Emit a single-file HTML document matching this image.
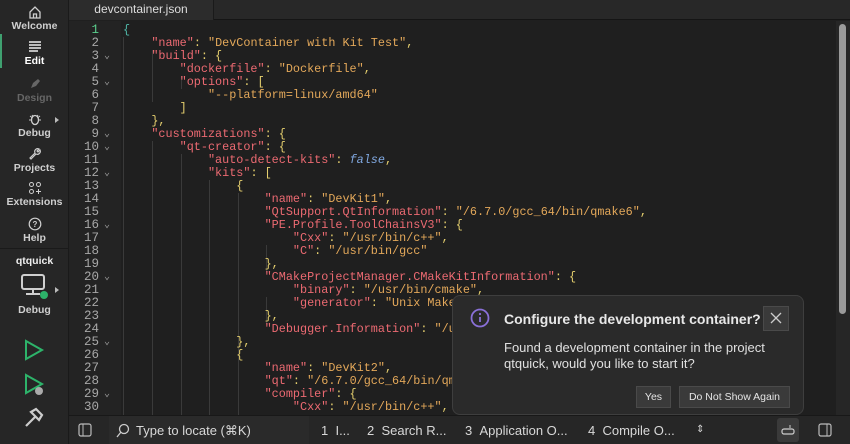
<!DOCTYPE html>
<html><head><meta charset="utf-8"><style>
*{margin:0;padding:0;box-sizing:border-box}
body{width:850px;height:444px;background:#1f1f1f;overflow:hidden;position:relative;font-family:"Liberation Sans",sans-serif}
#side{position:absolute;left:0;top:0;width:69px;height:444px;background:#262626;border-right:1px solid #1a1a1a}
.sb{position:absolute;left:0;width:69px;text-align:center;color:#cfcfcf;font-size:10.5px;font-weight:bold}
.sb svg{display:block;margin:0 auto 1px}
#tabbar{position:absolute;left:69px;top:0;right:0;height:20px;background:#282828;border-bottom:1px solid #151515}
#tab{position:absolute;left:0;top:0;width:145px;height:20px;background:#2c2c2c;color:#ddd;font-size:12px;text-align:center;line-height:19px;border-right:1px solid #1a1a1a}
#gutter{position:absolute;left:69px;top:21px;width:52px;height:394px;background:#232323}
.code{position:absolute;top:24px;font-family:"Liberation Mono",monospace;font-size:11.8px;line-height:13px;white-space:pre}
#nums{left:69px;width:30px;text-align:right;color:#a8a8a8;font-size:12.5px}
#folds{left:104px;color:#9a9a9a;font-size:10px}
#src{left:123px;color:#e5cf6e}
.k{color:#ec6a72}.s{color:#e3a85a}.b{color:#80a8e0;font-style:italic}
.g{position:absolute;width:1px;background:#3a3a3a}
#status{position:absolute;left:69px;top:415px;right:0;height:29px;background:#262626;border-top:1px solid #181818;color:#d8d8d8;font-size:13px}
#status span{position:absolute;top:7px}
#dlg{position:absolute;left:452px;top:295px;width:352px;height:120px;background:#2a2a2a;border:1px solid #3e3e3e;border-radius:8px;color:#e8e8e8}
.btn{position:absolute;top:90px;height:22px;background:#3a3a3a;border:1px solid #4a4a4a;font-size:10.5px;text-align:center;line-height:20px;color:#e5e5e5}
</style></head><body>
<div id="side">
 <div style="position:absolute;left:0;top:34px;width:2px;height:34px;background:#3fa070"></div>
 <div class="sb" style="top:5px"><svg width="14" height="14" viewBox="0 0 14 14"><path d="M2 7L7 2l5 5v6H2z M5.5 13V9h3v4" fill="none" stroke="#cfcfcf" stroke-width="1.3"/></svg>Welcome</div>
 <div class="sb" style="top:40px;color:#fff"><svg width="14" height="14" viewBox="0 0 14 14"><path d="M1 2h12M1 5h12M1 8h12M1 11h9" stroke="#eee" stroke-width="1.4"/></svg>Edit</div>
 <div class="sb" style="top:77px;color:#666"><svg width="14" height="14" viewBox="0 0 14 14"><path d="M3 11l2-5 5-4 2 2-4 5z" fill="#666"/></svg>Design</div>
 <div class="sb" style="top:112px"><svg width="14" height="14" viewBox="0 0 14 14"><ellipse cx="7" cy="8" rx="3.5" ry="4.5" fill="none" stroke="#cfcfcf" stroke-width="1.3"/><path d="M1 8h2.5M10.5 8H13M2 4l2 1.5M12 4l-2 1.5M4 3l1 1.5M10 3l-1 1.5" stroke="#cfcfcf"/></svg>Debug</div>
 <div style="position:absolute;left:55px;top:117px;border-left:4px solid #bbb;border-top:3px solid transparent;border-bottom:3px solid transparent"></div>
 <div class="sb" style="top:147px"><svg width="14" height="14" viewBox="0 0 14 14"><path d="M12 3a3 3 0 0 1-4 4L3 12l-1-1 5-5a3 3 0 0 1 4-4l-2 2 1 1z" fill="none" stroke="#cfcfcf" stroke-width="1.2"/></svg>Projects</div>
 <div class="sb" style="top:181px"><svg width="14" height="14" viewBox="0 0 14 14"><circle cx="3.5" cy="3.5" r="2" fill="none" stroke="#cfcfcf"/><circle cx="10.5" cy="3.5" r="2" fill="none" stroke="#cfcfcf"/><circle cx="3.5" cy="10.5" r="2" fill="none" stroke="#cfcfcf"/><path d="M10.5 8v5M8 10.5h5" stroke="#cfcfcf"/></svg>Extensions</div>
 <div class="sb" style="top:217px"><svg width="14" height="14" viewBox="0 0 14 14"><circle cx="7" cy="7" r="5.8" fill="none" stroke="#cfcfcf" stroke-width="1.2"/><text x="7" y="10" font-size="8" text-anchor="middle" fill="#cfcfcf">?</text></svg>Help</div>
 <div style="position:absolute;left:0;top:248px;width:69px;height:1px;background:#1a1a1a"></div>
 <div class="sb" style="top:255px;color:#eee">qtquick</div>
 <svg style="position:absolute;left:20px;top:273px" width="30" height="26" viewBox="0 0 30 26"><rect x="2" y="2" width="22" height="14" rx="2" fill="none" stroke="#cfcfcf" stroke-width="2"/><path d="M13 16v4M6 21h14" stroke="#cfcfcf" stroke-width="2"/><circle cx="24" cy="22" r="4" fill="#2db36a"/></svg>
 <div style="position:absolute;left:55px;top:287px;border-left:4px solid #bbb;border-top:3px solid transparent;border-bottom:3px solid transparent"></div>
 <div class="sb" style="top:304px">Debug</div>
 <svg style="position:absolute;left:23px;top:339px" width="22" height="22"><path d="M3 2l16 9-16 9z" fill="none" stroke="#2db36a" stroke-width="2"/></svg>
 <svg style="position:absolute;left:23px;top:373px" width="24" height="24"><path d="M3 2l16 9-16 9z" fill="none" stroke="#2db36a" stroke-width="2"/><circle cx="16" cy="18" r="4" fill="#aaa"/></svg>
 <svg style="position:absolute;left:22px;top:406px" width="24" height="24"><path d="M4 20l9-9M9 6l5-3 6 6-3 5z" fill="none" stroke="#ccc" stroke-width="2.2"/></svg>
</div>
<div id="tabbar"><div id="tab">devcontainer.json</div></div>
<div id="gutter"></div>
<div class="g" style="left:123px;top:37px;height:378px"></div>
<div class="g" style="left:152px;top:50px;height:52px"></div>
<div class="g" style="left:181px;top:76px;height:13px"></div>
<div class="g" style="left:152px;top:141px;height:274px"></div>
<div class="g" style="left:181px;top:154px;height:261px"></div>
<div class="g" style="left:209px;top:180px;height:235px"></div>
<div class="g" style="left:238px;top:193px;height:222px"></div>
<div class="g" style="left:266px;top:245px;height:26px"></div>
<div class="g" style="left:266px;top:297px;height:26px"></div>
<div class="code" id="nums"><span style="color:#5bd08e">1</span>
2
3
4
5
6
7
8
9
10
11
12
13
14
15
16
17
18
19
20
21
22
23
24
25
26
27
28
29
30</div>
<div class="code" id="folds">

⌄

⌄



⌄
⌄

⌄



⌄



⌄




⌄



⌄</div>
<div class="code" id="src"><span style="color:#4fb8a8">{</span>
    <span class="k">"name"</span>: <span class="s">"DevContainer with Kit Test"</span>,
    <span class="k">"build"</span>: {
        <span class="k">"dockerfile"</span>: <span class="s">"Dockerfile"</span>,
        <span class="k">"options"</span>: [
            <span class="s">"--platform=linux/amd64"</span>
        ]
    },
    <span class="k">"customizations"</span>: {
        <span class="k">"qt-creator"</span>: {
            <span class="k">"auto-detect-kits"</span>: <span class="b">false</span>,
            <span class="k">"kits"</span>: [
                {
                    <span class="k">"name"</span>: <span class="s">"DevKit1"</span>,
                    <span class="k">"QtSupport.QtInformation"</span>: <span class="s">"/6.7.0/gcc_64/bin/qmake6"</span>,
                    <span class="k">"PE.Profile.ToolChainsV3"</span>: {
                        <span class="k">"Cxx"</span>: <span class="s">"/usr/bin/c++"</span>,
                        <span class="k">"C"</span>: <span class="s">"/usr/bin/gcc"</span>
                    },
                    <span class="k">"CMakeProjectManager.CMakeKitInformation"</span>: {
                        <span class="k">"binary"</span>: <span class="s">"/usr/bin/cmake"</span>,
                        <span class="k">"generator"</span>: <span class="s">"Unix Makefiles"</span>
                    },
                    <span class="k">"Debugger.Information"</span>: <span class="s">"/usr/bin/gdb"</span>
                },
                {
                    <span class="k">"name"</span>: <span class="s">"DevKit2"</span>,
                    <span class="k">"qt"</span>: <span class="s">"/6.7.0/gcc_64/bin/qmake"</span>,
                    <span class="k">"compiler"</span>: {
                        <span class="k">"Cxx"</span>: <span class="s">"/usr/bin/c++"</span>,</div>
<div style="position:absolute;left:836px;top:21px;width:14px;height:394px;background:#262626"></div>
<div style="position:absolute;left:839px;top:24px;width:7px;height:290px;background:#9a9a9a;border-radius:4px"></div>
<div id="status">
 <svg style="position:absolute;left:9px;top:7px" width="14" height="14"><rect x="1" y="1" width="12" height="12" rx="2" fill="none" stroke="#bbb" stroke-width="1.2"/><path d="M5 1v12" stroke="#bbb"/></svg>
 <div style="position:absolute;left:40px;top:0;width:200px;height:28px;background:#2a2a2a"></div>
 <svg style="position:absolute;left:46px;top:7px" width="16" height="16"><circle cx="9" cy="6" r="4.5" fill="none" stroke="#ccc" stroke-width="1.3"/><path d="M6 9l-4 5" stroke="#ccc" stroke-width="1.3"/></svg>
 <span style="left:67px">Type to locate (⌘K)</span>
 <span style="left:252px">1 &nbsp;I...</span>
 <span style="left:298px">2 &nbsp;Search R...</span>
 <span style="left:396px">3 &nbsp;Application O...</span>
 <span style="left:519px">4 &nbsp;Compile O...</span>
 <span style="left:627px;font-size:10px;top:8px">⇕</span>
 <div style="position:absolute;left:708px;top:2px;width:22px;height:24px;background:#3a3a3a;border-radius:3px"></div>
 <svg style="position:absolute;left:712px;top:8px" width="14" height="12"><rect x="1" y="5" width="12" height="5" rx="2" fill="none" stroke="#ccc" stroke-width="1.2"/><path d="M9 1v3" stroke="#ccc"/></svg>
 <svg style="position:absolute;left:749px;top:7px" width="14" height="14"><rect x="1" y="1" width="12" height="12" rx="2" fill="none" stroke="#bbb" stroke-width="1.2"/><path d="M9 1v12" stroke="#bbb"/></svg>
</div>
<div id="dlg">
 <svg style="position:absolute;left:17px;top:12px" width="20" height="20"><circle cx="10" cy="10" r="8.5" fill="none" stroke="#8a70d8" stroke-width="1.8"/><path d="M10 9v5" stroke="#8a70d8" stroke-width="1.8"/><circle cx="10" cy="6" r="1.1" fill="#8a70d8"/></svg>
 <div style="position:absolute;left:51px;top:15px;font-size:14px;font-weight:bold">Configure the development container?</div>
 <div style="position:absolute;left:310px;top:10px;width:26px;height:25px;background:#3a3a3a;border:1px solid #4a4a4a"><svg width="24" height="23"><path d="M7 6l10 10M17 6L7 16" stroke="#ccc" stroke-width="1.3"/></svg></div>
 <div style="position:absolute;left:51px;top:44px;font-size:13px;line-height:16px;color:#e0e0e0">Found a development container in the project<br>qtquick, would you like to start it?</div>
 <div class="btn" style="left:183px;width:35px">Yes</div>
 <div class="btn" style="left:226px;width:111px">Do Not Show Again</div>
</div>
</body></html>
